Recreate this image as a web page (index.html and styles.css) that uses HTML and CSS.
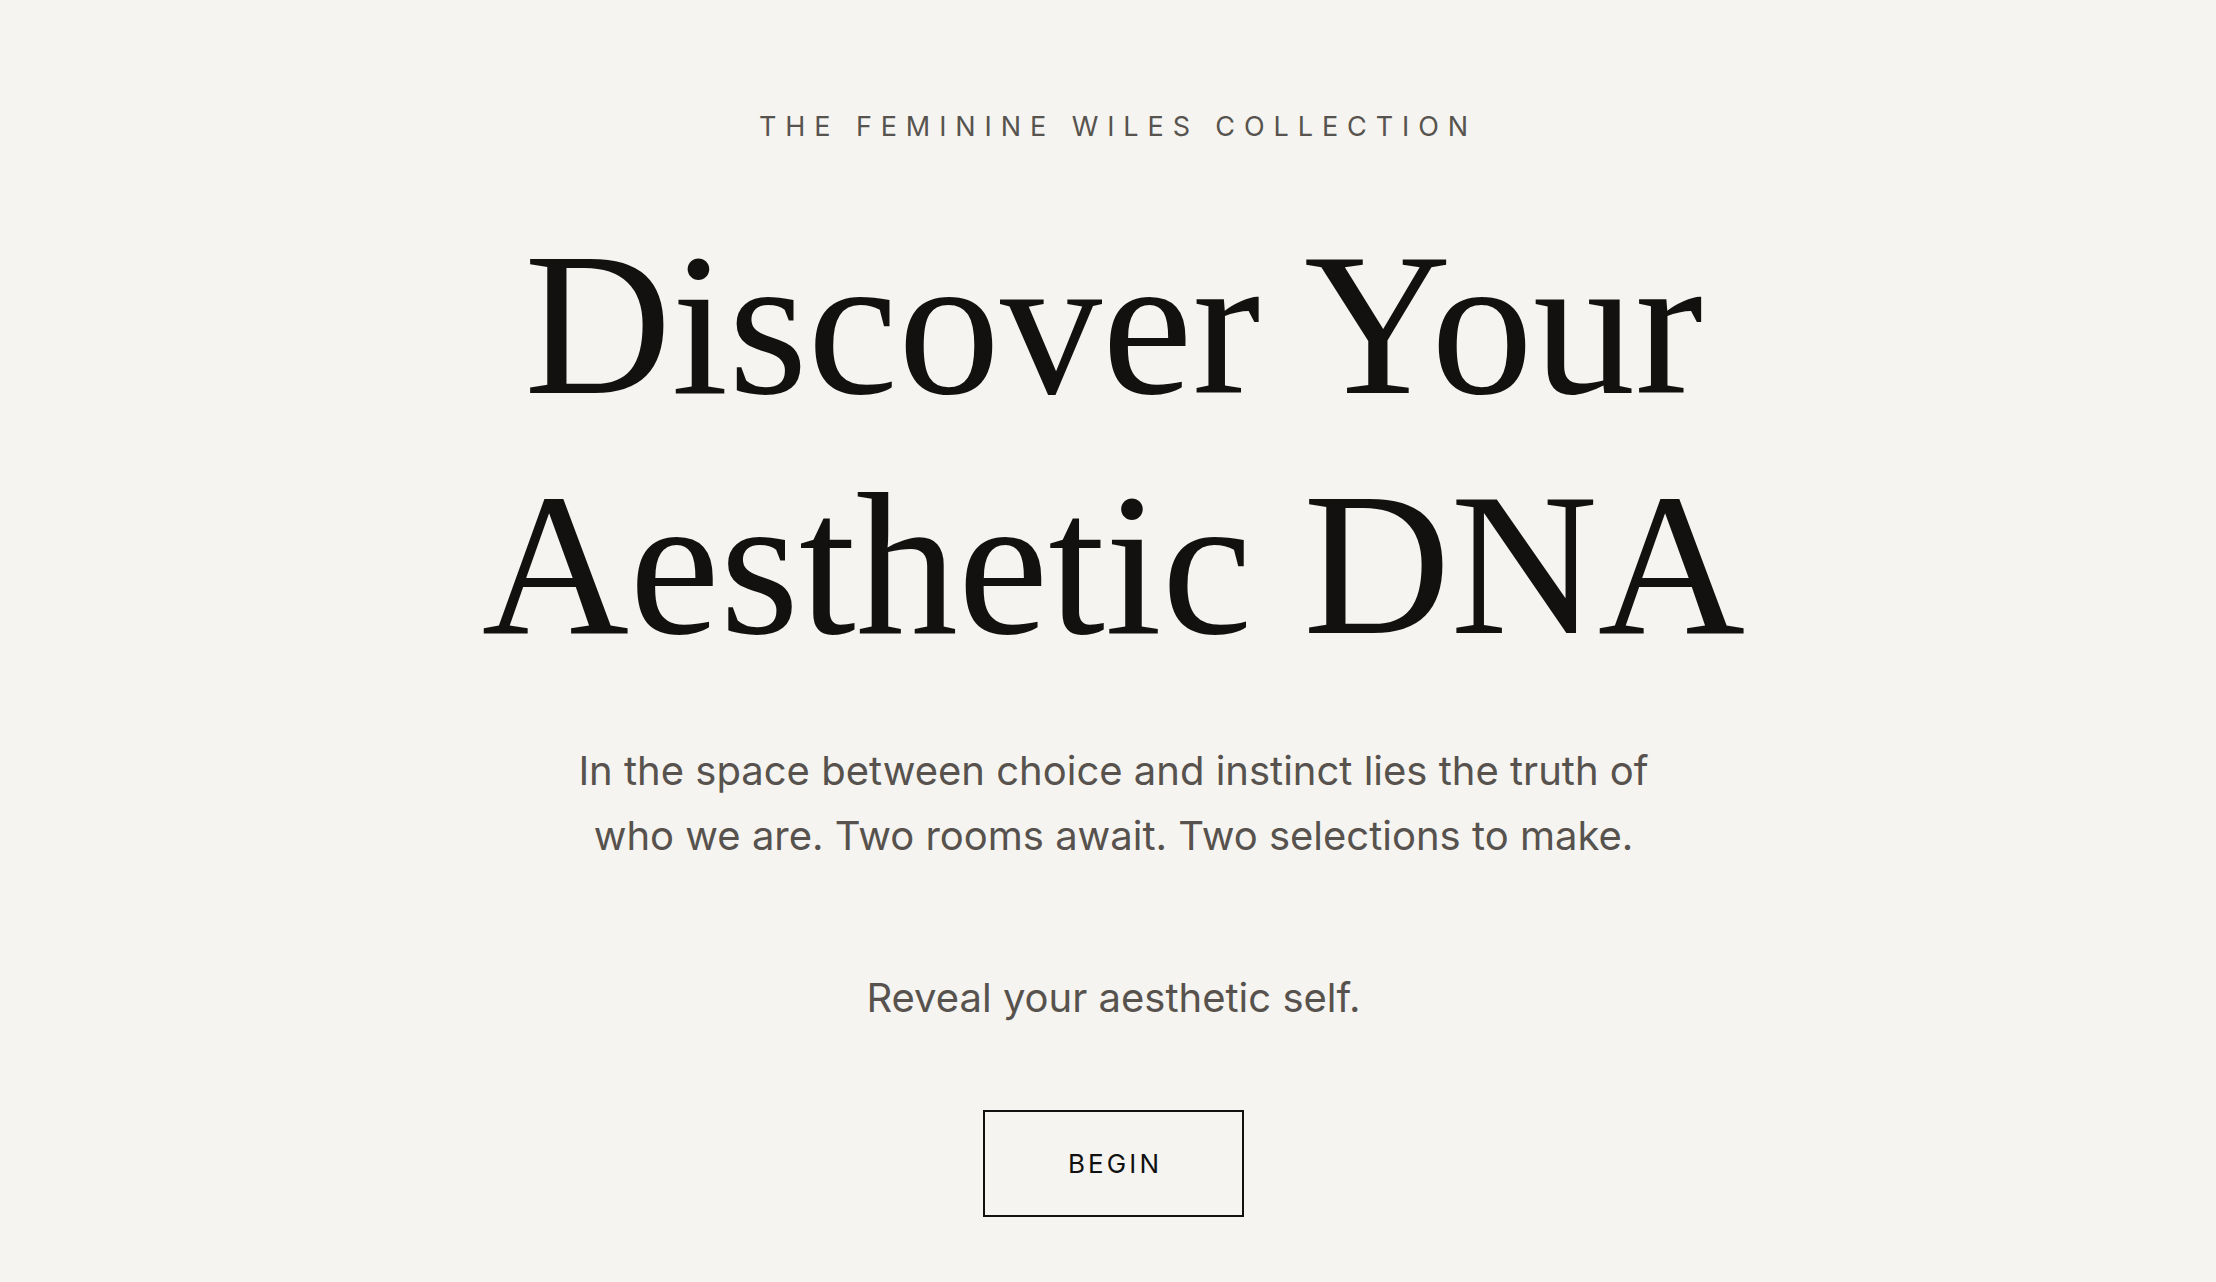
FILE: index.html
```html
<!DOCTYPE html>
<html lang="en">
<head>
<meta charset="utf-8">
<title>Discover Your Aesthetic DNA</title>
<link rel="stylesheet" href="styles.css">
</head>
<body>
<main class="hero">
  <p class="eyebrow">The Feminine Wiles Collection</p>
  <h1 class="title">Discover Your<br>Aesthetic DNA</h1>
  <p class="lead">In the space between choice and instinct lies the truth of<br>who we are. Two rooms await. Two selections to make.</p>
  <p class="reveal">Reveal your aesthetic self.</p>
  <button class="begin" type="button">Begin</button>
</main>
</body>
</html>
```
FILE: styles.css
```css
html, body {
  margin: 0;
  padding: 0;
}
body {
  background: #f5f4f0;
  min-height: 1282px;
  font-family: "Inter", "Liberation Sans", sans-serif;
}
.hero {
  display: flex;
  flex-direction: column;
  align-items: center;
  text-align: center;
  padding-top: 107px;
  padding-left: 11px;
}
.eyebrow {
  margin: 0;
  font-size: 27px;
  line-height: 40px;
  letter-spacing: 0.33em;
  text-transform: uppercase;
  color: #57534e;
  font-weight: 400;
  padding-left: 0.33em;
}
.title {
  margin: 57px 0 0;
  font-family: "Liberation Serif", "Times New Roman", serif;
  font-weight: 400;
  font-size: 204px;
  line-height: 240px;
  color: #121110;
  letter-spacing: 0;
}
.lead {
  margin: 54px 0 0;
  font-size: 40px;
  line-height: 65px;
  color: #57524d;
}
.reveal {
  margin: 97px 0 0;
  font-size: 40px;
  line-height: 65px;
  color: #57524d;
}
.begin {
  margin-top: 80px;
  box-sizing: border-box;
  width: 261px;
  height: 107px;
  padding: 0 0 0 0.12em;
  font-family: "Inter", "Liberation Sans", sans-serif;
  font-size: 26px;
  line-height: 30px;
  letter-spacing: 0.12em;
  text-transform: uppercase;
  color: #111;
  background: transparent;
  border: 2px solid #111;
  border-radius: 0;
  cursor: pointer;
}
```
